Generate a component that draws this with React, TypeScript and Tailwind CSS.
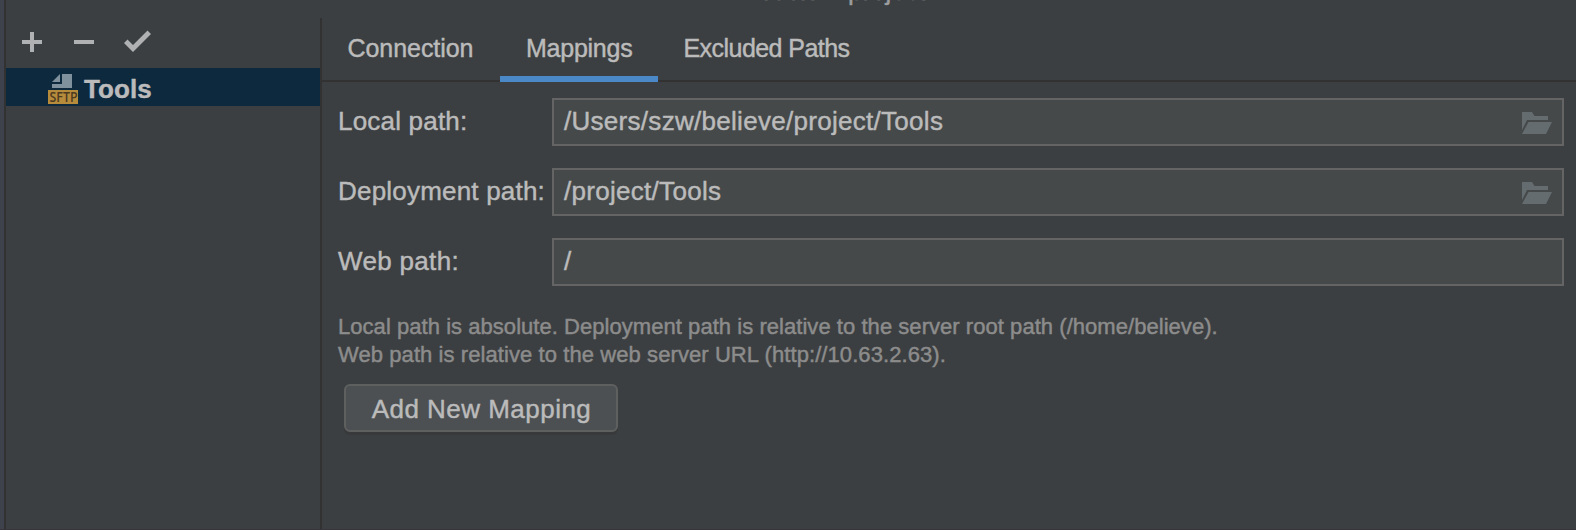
import React from "react";

const fields = [
  { label: "Local path:", value: "/Users/szw/believe/project/Tools", browse: true, ls: "tracking-[0.2px]" },
  { label: "Deployment path:", value: "/project/Tools", browse: true, ls: "tracking-[0.2px]" },
  { label: "Web path:", value: "/", browse: false, ls: "tracking-[0.33px]" },
];

function FolderIcon() {
  return (
    <svg width="30" height="22" viewBox="0 0 30 22" fill="#646c6f" className="mt-0.5 shrink-0">
      <path d="M0 0H10L12.5 4H26V8H5L0 18Z" />
      <path d="M6.5 10H30L24 22H0Z" />
    </svg>
  );
}

export default function App() {
  return (
    <div className="relative flex h-[530px] w-[1576px] overflow-hidden border-b border-[#38353a] bg-[#3c3f41] font-['Liberation_Sans',Arial,sans-serif] text-[26px] text-[#bbbbbb] [-webkit-text-stroke:0.45px]">
      <div className="w-1 shrink-0 bg-[#3e424c]" />
      <div className="w-0.5 shrink-0 bg-[#323232]" />
      <div className="absolute right-[650px] top-[-24px] whitespace-nowrap text-[26px] leading-[30px] text-[#9b9c9d]">Tools – project</div>
      <aside className="flex w-[314px] shrink-0 flex-col pt-[18px]">
        <div className="flex h-[50px] items-start pl-4">
          <svg width="130" height="40" viewBox="0 0 130 40" fill="#afb1b3">
            <path d="M8 14h4v8h8v4h-8v8H8v-8H0v-4h8Z" />
            <path d="M52 22h20v4H52Z" />
            <path d="M102 25l3.500-3.500 5.500 5.500L125.500 12.500l3.500 3.500L111 34Z" />
          </svg>
        </div>
        <div className="flex h-[38px] items-center gap-1.5 bg-[#0d293e] pl-[42px]">
          <svg width="30" height="30" viewBox="0 0 30 30" className="mt-1 shrink-0">
            <path d="M4 8 12 0V8Z M14 0H24V14H4V10H14Z" fill="#7f919c" />
            <path d="M0 16H30V30H0Z" fill="#b68b3c" />
            <text x="1.500" y="28" fontSize="14.500" textLength="28" lengthAdjust="spacingAndGlyphs" fontFamily="Open Sans, sans-serif" fontWeight="600" fill="#4d3a20" stroke="none">SFTP</text>
          </svg>
          <span className="mt-1 text-[26px] font-bold leading-[30px] tracking-[0.1px]">Tools</span>
        </div>
      </aside>
      <main className="mt-[18px] flex-1 border-l-2 border-[#323232]">
        <nav className="flex h-16 border-b-2 border-[#323232] text-[25px] leading-[60px]">
          <span className="w-[178px] pl-[25.5px] tracking-[-0.05px]">Connection</span>
          <span className="relative w-[158px] pl-[26px] tracking-[-0.25px]">
            Mappings
            <i className="absolute left-0 top-[58px] h-1.5 w-[158px] bg-[#4a88c7]" />
          </span>
          <span className="pl-[25.5px] tracking-[-0.55px]">Excluded Paths</span>
        </nav>
        <form className="flex flex-col gap-[22px] pt-4">
          {fields.map((f) => (
            <label key={f.label} className="flex h-12 pl-4 pr-3">
              <span className={`w-[214px] shrink-0 whitespace-nowrap leading-[46px] ${f.ls}`}>{f.label}</span>
              <span className="flex flex-1 items-center justify-between border-2 border-[#646464] bg-[#45494a] pl-2.5 pr-2.5">
                <span className="-mt-0.5 leading-none tracking-[0.29px]">{f.value}</span>
                {f.browse && <FolderIcon />}
              </span>
            </label>
          ))}
        </form>
        <p className="mt-[27px] whitespace-nowrap pl-4 text-[22px] leading-7 text-[#8c8c8c]">
          <span className="tracking-[0.045px]">Local path is absolute. Deployment path is relative to the server root path (/home/believe).</span>
          <br />
          <span className="tracking-[0.08px]">Web path is relative to the web server URL (http://10.63.2.63).</span>
        </p>
        <button className="ml-[22px] mt-[15px] flex h-12 w-[274px] items-center justify-center rounded-md border-2 border-[#5e6060] bg-[#4c5052] pl-px pt-0.5 tracking-[0.47px] shadow-[0_3px_0_#37393a]">Add New Mapping</button>
      </main>
    </div>
  );
}
